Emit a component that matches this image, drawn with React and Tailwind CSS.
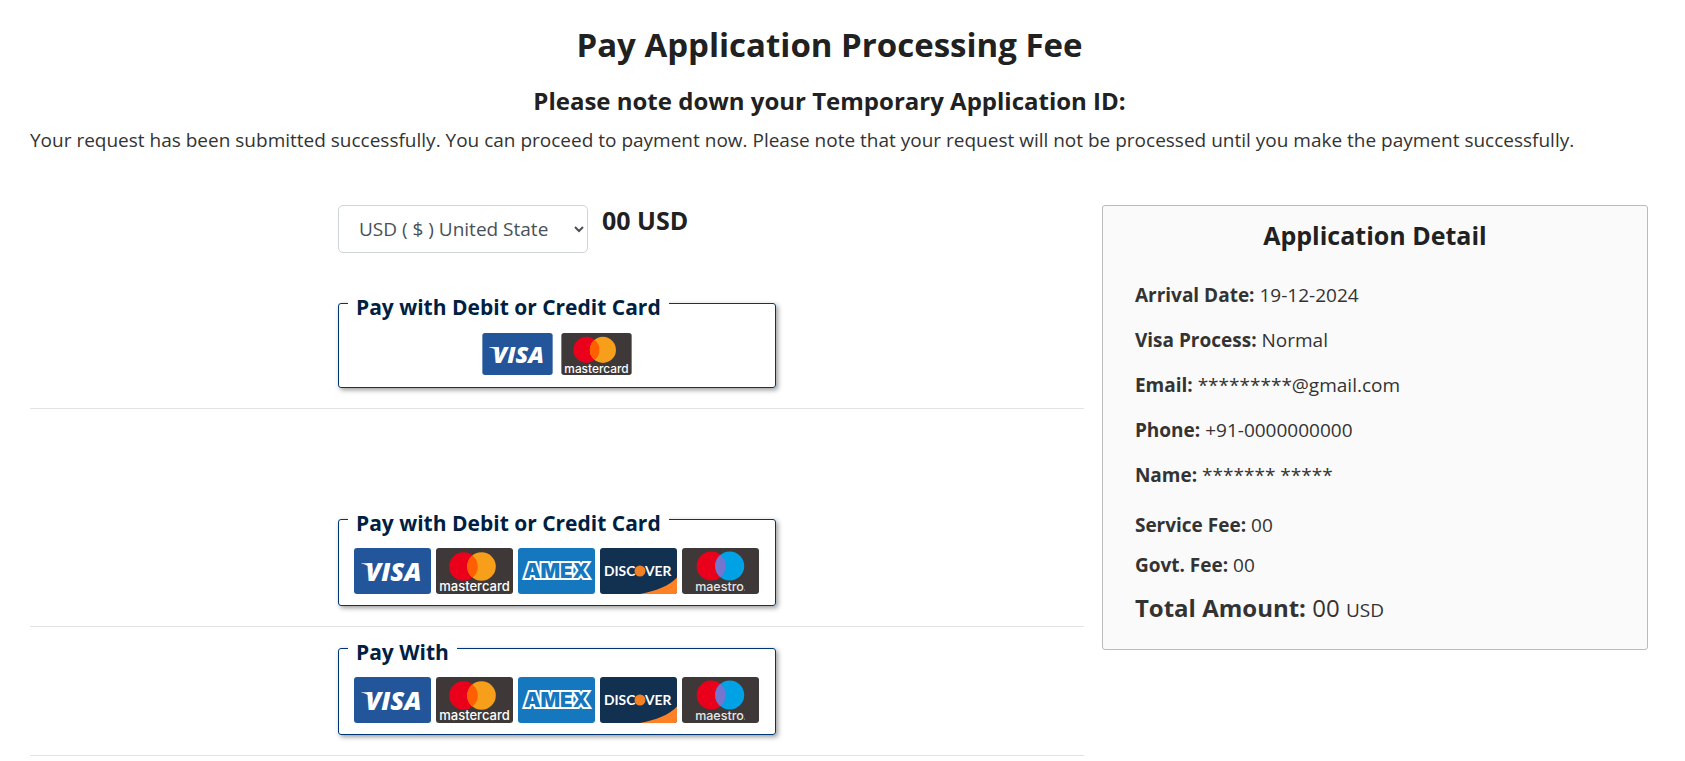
import React from "react";

const CARD_FONT = "'Open Sans', 'Noto Sans', sans-serif";
const ROUND_FONT = "Lato, 'Open Sans', sans-serif";
const WIDE_FONT = "Inter, 'Open Sans', sans-serif";

function Card({ label, fill, className, children }) {
  return (
    <svg viewBox="0 0 77 46" role="img" aria-label={label} className={className}>
      <rect width="77" height="46" rx="3" fill={fill} />
      {children}
    </svg>
  );
}

function Visa({ className }) {
  return (
    <Card label="Visa" fill="#22559a" className={className}>
      <path d="M7.500 15.200h7.600c1.600 0 2.200.6 2.500 1.800l1.500 6.600C17 19.500 13 16.500 7.500 15.800z" fill="#fff" />
      <text x="11.500" y="33.200" fontFamily={CARD_FONT} fontSize="25.500" fontWeight="800" fontStyle="italic" fill="#fff">VISA</text>
    </Card>
  );
}

function Mastercard({ className }) {
  return (
    <Card label="Mastercard" fill="#3e3938" className={className}>
      <circle cx="27.500" cy="18.500" r="14.300" fill="#eb001b" />
      <circle cx="45.500" cy="18.500" r="14.300" fill="#f79f1b" />
      <path d="M36.500 7.400a14.300 14.300 0 0 1 0 22.200a14.300 14.300 0 0 1 0-22.200z" fill="#ff5f00" />
      <text x="38.500" y="43.300" textAnchor="middle" fontFamily={WIDE_FONT} fontSize="13" fontWeight="500" fill="#fff">mastercard</text>
    </Card>
  );
}

function Amex({ className }) {
  return (
    <Card label="American Express" fill="#1578bf" className={className}>
      <text x="38.500" y="30" textAnchor="middle" fontFamily={WIDE_FONT} fontSize="20.500" fontWeight="900" fill="#1578bf" stroke="#fff" strokeWidth="4" strokeLinejoin="miter" paintOrder="stroke">AMEX</text>
    </Card>
  );
}

function Discover({ className }) {
  return (
    <Card label="Discover" fill="#12304f" className={className}>
      <path d="M40 46C56 43 69 38 77 29.500V43a3 3 0 0 1-3 3z" fill="#ff8126" />
      <text x="4" y="28.300" fontFamily={ROUND_FONT} fontSize="13.800" fontWeight="700" fill="#fff">DISC</text>
      <circle cx="40" cy="23" r="5.500" fill="#f48024" />
      <text x="45" y="28.300" fontFamily={ROUND_FONT} fontSize="13.800" fontWeight="700" fill="#fff">VER</text>
    </Card>
  );
}

function Maestro({ className }) {
  return (
    <Card label="Maestro" fill="#3e3938" className={className}>
      <circle cx="29.200" cy="18" r="14.500" fill="#eb001b" />
      <circle cx="47.700" cy="18" r="14.500" fill="#00a2e5" />
      <path d="M38.450 6.800a14.500 14.500 0 0 1 0 22.400a14.500 14.500 0 0 1 0-22.400z" fill="#7375cf" />
      <text x="37.500" y="42.700" textAnchor="middle" fontFamily={WIDE_FONT} fontSize="12.500" fontWeight="500" fill="#e8e6e6">maestro</text>
      <circle cx="62.500" cy="42" r="0.600" fill="#b5b2b2" />
    </Card>
  );
}

function PayBox({ title, cards, compact }) {
  const size = compact ? "h-[42px] w-[71px]" : "h-[46px] w-[77px]";
  return (
    <fieldset className="rounded-[3px] border border-[#003772] shadow-[2px_2px_5px_rgba(0,0,0,0.4)]">
      <legend className="ml-[9px] bg-white px-2 pt-2 text-[21px] leading-7 font-bold text-[#001f42]">
        {title}
      </legend>
      <button
        type="button"
        aria-label={title}
        className={
          compact
            ? "flex w-full cursor-pointer justify-center gap-2 pt-3 pb-3"
            : "flex w-full cursor-pointer gap-[5px] pt-[11px] pb-[11px] pl-[15px]"
        }
      >
        {cards.map((Logo, i) => (
          <Logo key={i} className={size} />
        ))}
      </button>
    </fieldset>
  );
}

function Detail({ label, children }) {
  return (
    <p>
      <b className="font-bold">{label}</b> {children}
    </p>
  );
}

const allCards = [Visa, Mastercard, Amex, Discover, Maestro];

export default function App() {
  return (
    <main className="bg-white pt-[19px] font-['Open_Sans','Noto_Sans',sans-serif] text-[19px] leading-[30px] text-[#333]">
      <header className="pr-14 pl-[30px]">
        <h1 className="text-center text-[33px] leading-[52px] font-bold text-[#212121]">Pay Application Processing Fee</h1>
        <h2 className="mt-3 text-center text-[24px] leading-9 font-bold text-[#212121]">Please note down your Temporary Application ID:</h2>
        <p className="mt-1.5">
          Your request has been submitted successfully. You can proceed to payment now. Please note that your request will not be processed until you make the payment successfully.
        </p>
      </header>

      <div className="mt-[50px] grid grid-cols-[1.93fr_1fr] items-start gap-[18px] pr-[37px] pl-[30px]">
        <section>
          <div className="mx-auto flex w-[438px] items-start gap-3.5">
            <select aria-label="Currency" className="h-12 w-[250px] rounded-[5px] border border-[#ced4da] bg-white pr-1 pl-4 text-[19px] text-[#495057]">
              <option>USD ( $ ) United State</option>
            </select>
            <strong className="text-[25px] leading-[30px] font-bold text-[#212121]">00 USD</strong>
          </div>
          <div className="mx-auto mt-8 w-[438px]">
            <PayBox title="Pay with Debit or Credit Card" cards={[Visa, Mastercard]} compact />
          </div>
          <hr className="mt-5 border-[#e3e3e3]" />
          <div className="mx-auto mt-[92px] w-[438px]">
            <PayBox title="Pay with Debit or Credit Card" cards={allCards} />
          </div>
          <hr className="mt-5 border-[#e3e3e3]" />
          <div className="mx-auto mt-[3px] w-[438px]">
            <PayBox title="Pay With" cards={allCards} />
          </div>
          <hr className="mt-5 border-[#e3e3e3]" />
        </section>

        <aside className="rounded-[3px] border border-[#bbb] bg-[#fafafa] px-8 pt-[11px] pb-[21px]">
          <h2 className="text-center text-[25px] leading-9 font-bold text-[#212121]">Application Detail</h2>
          <div className="mt-[27px] flex flex-col gap-[15px]">
            <Detail label="Arrival Date:">19-12-2024</Detail>
            <Detail label="Visa Process:">Normal</Detail>
            <Detail label="Email:">*********@gmail.com</Detail>
            <Detail label="Phone:">+91-0000000000</Detail>
            <Detail label="Name:">******* *****</Detail>
          </div>
          <div className="mt-5 flex flex-col gap-[10px]">
            <Detail label="Service Fee:">00</Detail>
            <Detail label="Govt. Fee:">00</Detail>
          </div>
          <p className="mt-[10px] text-[24px] leading-9">
            <b className="font-bold">Total Amount:</b> 00 <span className="text-[19px]">USD</span>
          </p>
        </aside>
      </div>
    </main>
  );
}
